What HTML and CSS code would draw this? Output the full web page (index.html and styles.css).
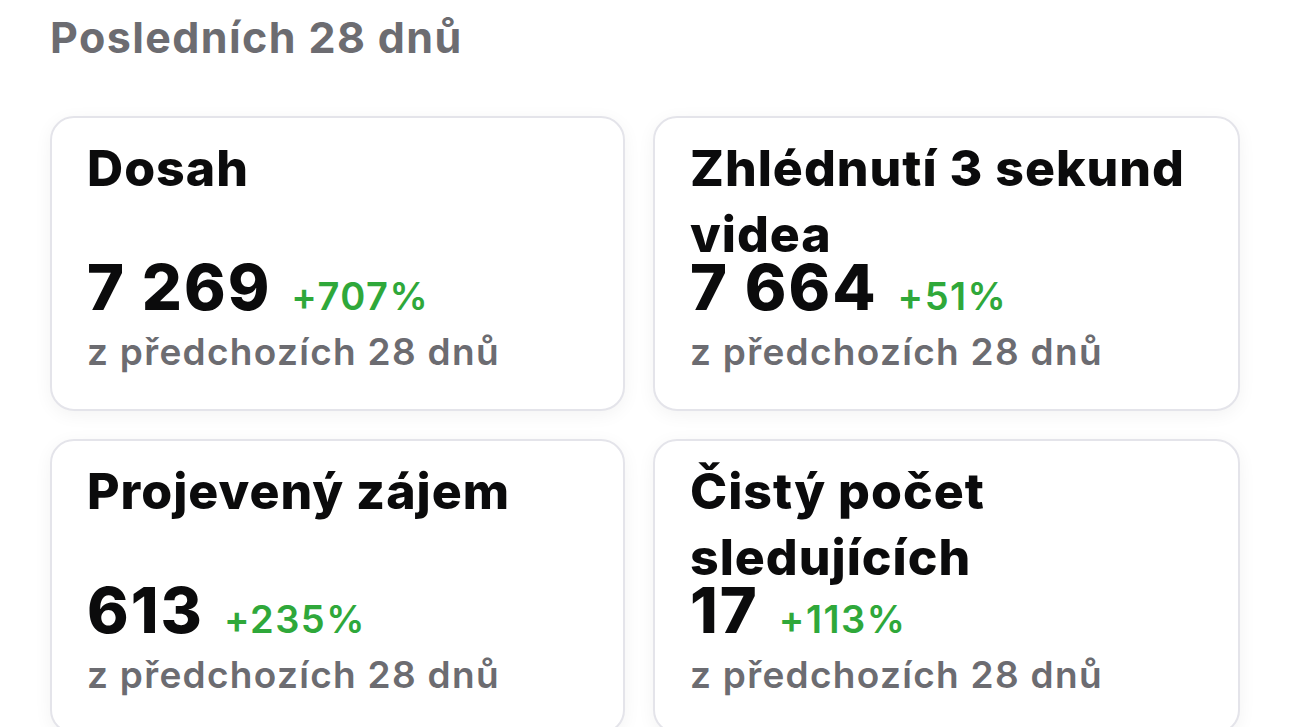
FILE: index.html
```html
<!DOCTYPE html>
<html lang="cs">
<head>
  <meta charset="UTF-8" />
  <title>Posledních 28 dnů</title>
  <meta name="viewport" content="width=device-width, initial-scale=1.0" />
  <link rel="stylesheet" href="styles.css">
</head>
<body>
  <div class="page">
    <h2 class="period">Posledních 28 dnů</h2>

    <div class="stats">
      <div class="card">
        <div class="title">Dosah</div>
        <div class="value-row">
          <span class="value">7 269</span>
          <span class="change">+707%</span>
        </div>
        <div class="compare">z předchozích 28 dnů</div>
      </div>

      <div class="card">
        <div class="title">Zhlédnutí 3 sekund videa</div>
        <div class="value-row">
          <span class="value">7 664</span>
          <span class="change">+51%</span>
        </div>
        <div class="compare">z předchozích 28 dnů</div>
      </div>

      <div class="card">
        <div class="title">Projevený zájem</div>
        <div class="value-row">
          <span class="value">613</span>
          <span class="change">+235%</span>
        </div>
        <div class="compare">z předchozích 28 dnů</div>
      </div>

      <div class="card">
        <div class="title">Čistý počet sledujících</div>
        <div class="value-row">
          <span class="value">17</span>
          <span class="change">+113%</span>
        </div>
        <div class="compare">z předchozích 28 dnů</div>
      </div>
    </div>
  </div>
</body>
</html>
```

FILE: styles.css
```css
:root {
  --text: #0b0b0c;
  --muted: #6c6c71;
  --green: #2fa83a;
  --border: #e4e4ea;
}

body {
  margin: 0;
  padding: 0;
  font-family: Inter, Roboto, sans-serif;
  background: #fff;
  color: var(--text);
  overflow: hidden;
}

.page {
  padding: 0 50px;
}

.period {
  margin: 0;
  padding-top: 11px;
  height: 116px;
  box-sizing: border-box;
  font-size: 43px;
  line-height: 52px;
  font-weight: 700;
  letter-spacing: 1.4px;
  color: var(--muted);
}

.stats {
  display: grid;
  grid-template-columns: 575px 587px;
  column-gap: 28px;
  row-gap: 28px;
}

.card {
  height: 295px;
  box-sizing: border-box;
  padding: 17px 30px 0 35px;
  background: #fff;
  border: 2px solid var(--border);
  border-radius: 24px;
  box-shadow: 0 4px 18px rgba(0, 0, 0, 0.05);
}

.title {
  font-size: 50px;
  line-height: 66px;
  font-weight: 800;
  letter-spacing: 1px;
  min-height: 132px;
}

.value-row {
  display: flex;
  align-items: baseline;
  gap: 20px;
  line-height: 40px;
}

.value {
  font-size: 63px;
  font-weight: 800;
  letter-spacing: 2px;
}

.change {
  font-size: 38px;
  line-height: 18px;
  font-weight: 600;
  letter-spacing: 1.5px;
  color: var(--green);
}

.compare {
  margin-top: 23px;
  font-size: 37px;
  line-height: 44px;
  font-weight: 600;
  letter-spacing: 1.3px;
  color: var(--muted);
}
```
